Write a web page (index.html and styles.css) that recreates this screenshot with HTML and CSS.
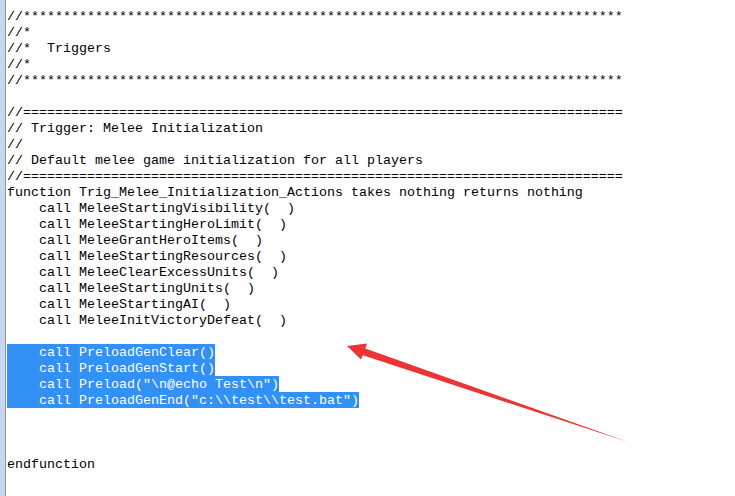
FILE: index.html
```html
<!DOCTYPE html>
<html>
<head>
<meta charset="utf-8">
<link rel="stylesheet" href="styles.css">
</head>
<body>
<div class="editor">
  <div class="gutter"></div>
  <div class="code">
<div class="line">//***************************************************************************</div>
<div class="line">//*</div>
<div class="line">//*  Triggers</div>
<div class="line">//*</div>
<div class="line">//***************************************************************************</div>
<div class="line"></div>
<div class="line">//===========================================================================</div>
<div class="line">// Trigger: Melee Initialization</div>
<div class="line">//</div>
<div class="line">// Default melee game initialization for all players</div>
<div class="line">//===========================================================================</div>
<div class="line">function Trig_Melee_Initialization_Actions takes nothing returns nothing</div>
<div class="line">    call MeleeStartingVisibility(  )</div>
<div class="line">    call MeleeStartingHeroLimit(  )</div>
<div class="line">    call MeleeGrantHeroItems(  )</div>
<div class="line">    call MeleeStartingResources(  )</div>
<div class="line">    call MeleeClearExcessUnits(  )</div>
<div class="line">    call MeleeStartingUnits(  )</div>
<div class="line">    call MeleeStartingAI(  )</div>
<div class="line">    call MeleeInitVictoryDefeat(  )</div>
<div class="line"></div>
<div class="line sel">    call PreloadGenClear()</div>
<div class="line sel">    call PreloadGenStart()</div>
<div class="line sel">    call Preload("\n@echo Test\n")</div>
<div class="line sel">    call PreloadGenEnd("c:\\test\\test.bat")</div>
<div class="line"></div>
<div class="line"></div>
<div class="line"></div>
<div class="line">endfunction</div>
  </div>
  <svg class="arrow" width="735" height="496" viewBox="0 0 735 496">
    <polygon points="347,346 367,343.5 365.3,348.6 628,442 362.8,355.2 361,359.6" fill="#ec3434"/>
  </svg>
</div>
</body>
</html>
```
FILE: styles.css
```css
html, body {
  margin: 0;
  padding: 0;
  background: #ffffff;
}
.editor {
  position: relative;
  display: flex;
  width: 735px;
  height: 496px;
  overflow: hidden;
  background: #ffffff;
}
.gutter {
  width: 5px;
  flex: none;
  background: #c8d8ec;
  border-right: 1px solid #8596ae;
}
.code {
  flex: 1;
  padding: 8px 0 0 1px;
  font-family: "Liberation Mono", monospace;
  font-size: 13.333px;
  color: #000000;
}
.line {
  height: 16px;
  line-height: 18px;
  white-space: pre;
}
.line.sel {
  width: fit-content;
  background: #3390f4;
  color: #ffffff;
}
.arrow {
  position: absolute;
  left: 0;
  top: 0;
  pointer-events: none;
}
```
